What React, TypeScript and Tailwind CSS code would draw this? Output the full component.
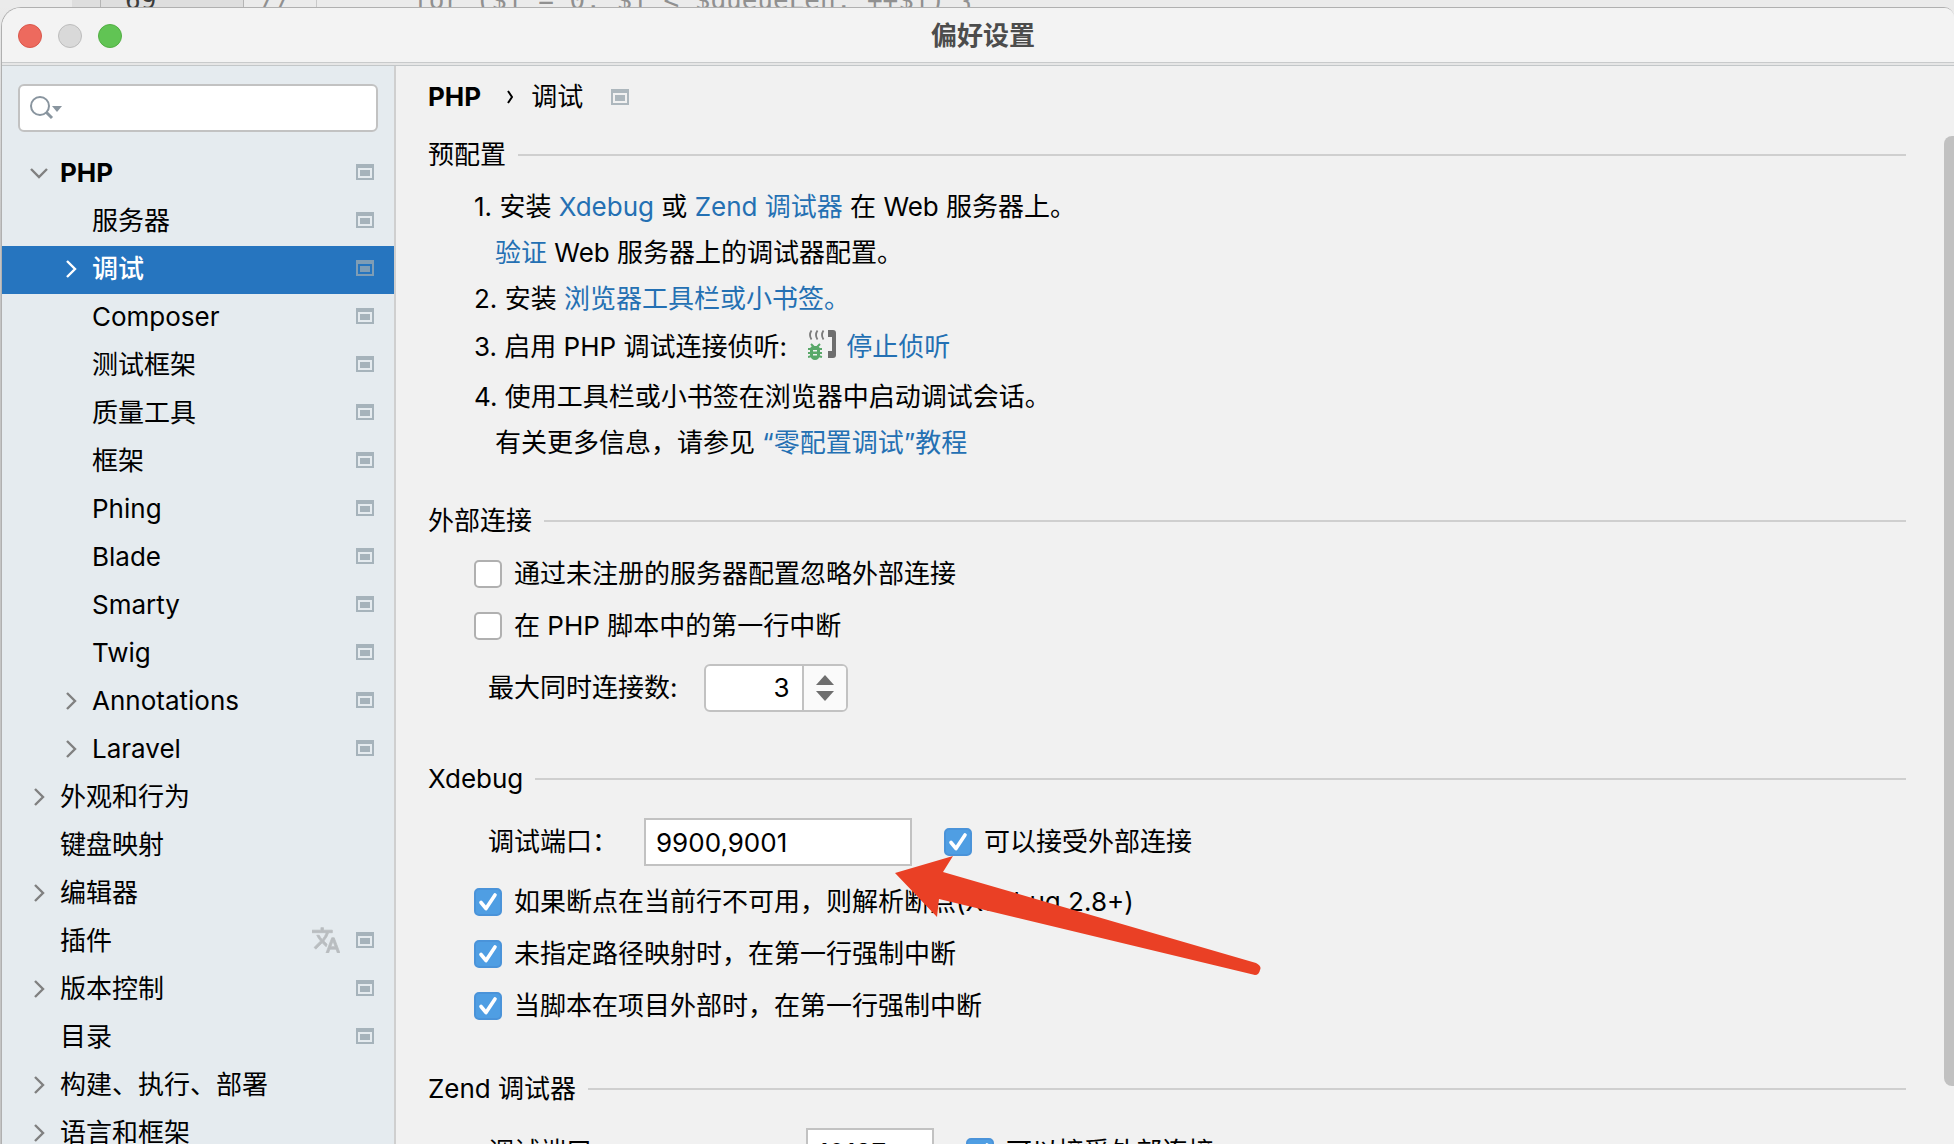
import { useState } from "react";
import type { ReactNode } from "react";

type TreeItem = {
  label: string
  level: number
  arrow?: 'down' | 'right'
  project?: boolean
  translate?: boolean
  bold?: boolean
}

const items: TreeItem[] = [
  { label: 'PHP', level: 0, arrow: 'down', project: true, bold: true },
  { label: '服务器', level: 1, project: true },
  { label: '调试', level: 1, arrow: 'right', project: true },
  { label: 'Composer', level: 1, project: true },
  { label: '测试框架', level: 1, project: true },
  { label: '质量工具', level: 1, project: true },
  { label: '框架', level: 1, project: true },
  { label: 'Phing', level: 1, project: true },
  { label: 'Blade', level: 1, project: true },
  { label: 'Smarty', level: 1, project: true },
  { label: 'Twig', level: 1, project: true },
  { label: 'Annotations', level: 1, arrow: 'right', project: true },
  { label: 'Laravel', level: 1, arrow: 'right', project: true },
  { label: '外观和行为', level: 0, arrow: 'right' },
  { label: '键盘映射', level: 0 },
  { label: '编辑器', level: 0, arrow: 'right' },
  { label: '插件', level: 0, project: true, translate: true },
  { label: '版本控制', level: 0, arrow: 'right', project: true },
  { label: '目录', level: 0, project: true },
  { label: '构建、执行、部署', level: 0, arrow: 'right' },
  { label: '语言和框架', level: 0, arrow: 'right' },
]

export default function App() {
  const [selected, setSelected] = useState<string>('调试')

  return (
    <div className="relative flex h-screen flex-col overflow-hidden bg-[#c4c4c4] font-[Inter,'Noto_Sans_CJK_SC',sans-serif] text-[26px] leading-[46px] text-black">
      <EditorStrip />
      <div className="flex min-h-0 flex-1 bg-linear-to-b from-[#ebebeb] to-[#c4c4c4] to-20% pl-px">
        <div className="flex min-w-0 flex-1 flex-col overflow-hidden rounded-tl-[20px] rounded-tr-[10px] border-t border-l border-[#b0b0b0] bg-[#f1f1f1]">
          <TitleBar />
          <div className="flex min-h-0 flex-1">
            <aside className="w-[394px] shrink-0 overflow-hidden border-r-2 border-[#cfcfcf] bg-[#e5ebef]">
              <SearchBox />
              <nav className="mt-[18px]">
                {items.map((item) => (
                  <TreeRow
                    key={item.label}
                    item={item}
                    active={item.label === selected}
                    onSelect={() => setSelected(item.label)}
                  />
                ))}
              </nav>
            </aside>
            <main className="relative min-w-0 flex-1 overflow-hidden pt-2 pr-12 pl-8">
              <DebugSettings />
              <div className="absolute top-[70px] right-0 h-[950px] w-[10px] rounded-l-lg bg-[#c1c1c1]" />
            </main>
          </div>
        </div>
      </div>
      <Arrow />
    </div>
  );
}

// The editor behind the dialog, only a few pixels of it are visible
function EditorStrip() {
  return (
    <div className="flex h-[7px] shrink-0 overflow-hidden bg-[#ebebeb] font-['DejaVu_Sans_Mono',monospace] leading-[14px] text-[#909090]">
      <div className="w-[72px] shrink-0" />
      <div className="w-7 shrink-0 bg-[#dedede]" />
      <div className="flex w-[144px] shrink-0 items-end border-x border-[#b5b5b5] bg-[#dedede] pl-6 text-[#3c3c3c]">69</div>
      <div className="flex w-[73px] shrink-0 items-end border-r border-[#c9c9c9] pl-4">//</div>
      <pre className="flex items-end pl-24 font-[inherit]">{'for ($i = 0; $i < $queueLen; ++$i) {'}</pre>
    </div>
  )
}

function TitleBar() {
  return (
    <header className="shrink-0 border-b border-[#c3c7c9] bg-[#e6e6e6] pb-0.5">
      <div className="flex h-[55px] items-center border-b border-[#c8cacb] bg-[#f3f3f3] pt-0.5 pr-1.5 pl-4">
        <div className="flex w-0 gap-4">
          <button aria-label="关闭" className="size-6 shrink-0 rounded-full border border-[#d9574b] bg-[#ed6a5e]" />
          <button aria-label="最小化" className="size-6 shrink-0 rounded-full border border-[#bcbcbc] bg-[#d9d9d9]" />
          <button aria-label="缩放" className="size-6 shrink-0 rounded-full border border-[#52ae43] bg-[#61c454]" />
        </div>
        <h1 className="flex-1 text-center font-bold text-[#4c4c4c]">偏好设置</h1>
      </div>
    </header>
  )
}

function SearchBox() {
  return (
    <label className="mx-4 mt-[18px] flex h-12 items-center rounded-md border-2 border-[#c2c2c2] bg-white pl-2">
      <svg width="34" height="26" viewBox="0 0 34 26" fill="none" className="shrink-0">
        <circle cx="12" cy="11" r="9" stroke="#89959f" strokeWidth="2" />
        <path d="M18 17l6 6" stroke="#89959f" strokeWidth="3" />
        <path d="M24 11h10l-5 6z" fill="#89959f" />
      </svg>
      <input type="text" aria-label="搜索" className="w-full min-w-0 bg-transparent px-2 outline-none" />
    </label>
  )
}

function ProjectIcon({ className = '' }: { className?: string }) {
  return (
    <svg width="18" height="16" viewBox="0 0 18 16" className={'shrink-0 ' + className}>
      <path fillRule="evenodd" d="M0 0h18v16H0zM2 4v10h14V4z" fill="currentColor" />
      <path d="M4 6h10v6H4z" fill="currentColor" />
    </svg>
  )
}

function Chevron({ down }: { down?: boolean }) {
  return (
    <svg width="18" height="18" viewBox="0 0 18 18" fill="none" stroke="currentColor" strokeWidth="2.4" className="shrink-0">
      <path d={down ? 'M1 5l8 8 8-8' : 'M5 1l8 8-8 8'} />
    </svg>
  )
}

function TranslateIcon() {
  return (
    <svg width="28" height="26" viewBox="1 1.5 22 20.5" className="shrink-0 text-[#b9bdc0]">
      <path
        fill="currentColor"
        stroke="currentColor"
        strokeWidth="0.6"
        d="M12.87 15.07l-2.54-2.51.03-.03A17.52 17.52 0 0 0 14.07 6H17V4h-7V2H8v2H1v2h11.17C11.5 7.92 10.44 9.75 9 11.35 8.07 10.32 7.3 9.19 6.69 8h-2c.73 1.63 1.73 3.17 2.98 4.56l-5.09 5.02L4 19l5-5 3.11 3.11.76-2.04zM18.5 10h-2L12 22h2l1.12-3h4.75L21 22h2l-4.5-12zm-2.62 7l1.62-4.33L19.12 17h-3.24z"
      />
    </svg>
  )
}

function TreeRow({ item, active, onSelect }: { item: TreeItem; active: boolean; onSelect: () => void }) {
  return (
    <button
      onClick={onSelect}
      className={
        'flex h-12 w-full items-center pr-5 pb-0.5 text-left ' +
        (item.level === 0 ? 'pl-7 ' : 'pl-[60px] ') +
        (active ? 'bg-[#2675bf] font-medium text-white ' : '') +
        (item.bold ? 'font-bold' : '')
      }
    >
      <span className={'w-[18px] shrink-0 ' + (active ? 'text-white' : 'text-[#808080]')}>
        {item.arrow && <Chevron down={item.arrow === 'down'} />}
      </span>
      <span className="flex-1 pl-3">{item.label}</span>
      <span className={'flex items-center gap-4 pb-0.5 ' + (active ? 'text-[#7f9db5]' : 'text-[#a6b3bb]')}>
        {item.translate && <TranslateIcon />}
        {item.project && <ProjectIcon />}
      </span>
    </button>
  )
}

function Section({ title, children }: { title: string; children?: ReactNode }) {
  return (
    <section>
      <h2 className="flex items-center gap-3">
        {title}
        <span className="h-0.5 flex-1 bg-[#cfcfcf]" />
      </h2>
      {children}
    </section>
  )
}

function Link({ children }: { children: ReactNode }) {
  return <a href="#" className="text-[#2470b3]">{children}</a>
}

function CheckBox({ label, checked = false }: { label: string; checked?: boolean }) {
  return (
    <label className="flex h-[52px] items-center gap-3">
      <span className="relative size-7 shrink-0">
        <input
          type="checkbox"
          defaultChecked={checked}
          className="peer block size-7 appearance-none rounded-[5px] border-2 border-[#b0b0b0] bg-white checked:border-[#4a93d9] checked:bg-[#4f9ee3]"
        />
        <svg viewBox="0 0 28 28" fill="none" stroke="#fff" strokeWidth="3.6" strokeLinecap="round" strokeLinejoin="round" className="pointer-events-none absolute inset-0 hidden peer-checked:block">
          <path d="M7 14.500l5 6L21 7" />
        </svg>
      </span>
      <span>{label}</span>
    </label>
  )
}

function ListenIcon() {
  return (
    <svg width="28" height="30" viewBox="0 0 28 30" fill="none" className="mr-2.5 ml-3.5 inline-block align-[-4px]">
      <path d="M3.500 .5q-3 4.500 0 9M9.500 .5q-3 4.500 0 9M15.500 .5q-3 4.500 0 9" stroke="#7a7a7a" strokeWidth="1.800" />
      <path d="M20 0h5q3 0 3 3v22q0 3-3 3h-5v-7h4V7h-4z" fill="#6e6e6e" />
      <path d="M3 14l3 3M12 14l-3 3M0 19h4M0 23h4M0 27l4-1M14 19h-4M14 23h-4M14 27l-4-1" stroke="#59a869" strokeWidth="2" />
      <path fillRule="evenodd" d="M4 16h6q2 1 2 4v5q-1 5-5 5t-5-5v-5q0-3 2-4zM5 20v1.500h4V20zM5 24v1.500h4V24z" fill="#59a869" />
    </svg>
  )
}

function Spinner() {
  const [count, setCount] = useState<number>(3)
  return (
    <div className="flex h-12 w-36 overflow-hidden rounded-md border-2 border-[#c2c2c2] bg-white">
      <input
        id="max-connections"
        type="text"
        value={count}
        onChange={(e) => setCount(Number(e.target.value) || 0)}
        className="min-w-0 flex-1 pr-3 text-right outline-none"
      />
      <div className="flex w-11 flex-col items-center justify-center gap-1.5 border-l-2 border-[#c2c2c2] bg-[#fafafa] text-[#6e6e6e]">
        <button aria-label="增加" onClick={() => setCount(count + 1)}>
          <svg width="18" height="10" viewBox="0 0 18 10" className="block"><path d="M0 10L9 0l9 10z" fill="currentColor" /></svg>
        </button>
        <button aria-label="减少" onClick={() => setCount(count - 1)}>
          <svg width="18" height="10" viewBox="0 0 18 10" className="block"><path d="M0 0h18L9 10z" fill="currentColor" /></svg>
        </button>
      </div>
    </div>
  )
}

function DebugSettings() {
  return (
    <>
      <div className="flex items-center">
        <span className="font-bold">PHP</span>
        <svg width="8" height="14" viewBox="0 0 8 14" fill="none" stroke="#000" strokeWidth="2" className="mr-4 ml-[26px]"><path d="M1 1l4 6-4 6" /></svg>
        <span>调试</span>
        <ProjectIcon className="ml-7 text-[#adb7bd]" />
      </div>

      <div className="mt-3">
        <Section title="预配置">
          <ol className="mt-1.5 pl-[46px]">
            <li>
              1. 安装 <Link>Xdebug</Link> 或 <Link>Zend 调试器</Link> 在 Web 服务器上。
              <p className="pl-[21px]"><Link>验证</Link> Web 服务器上的调试器配置。</p>
            </li>
            <li>2. 安装 <Link>浏览器工具栏或小书签。</Link></li>
            <li className="mt-0.5">3. 启用 PHP 调试连接侦听: <ListenIcon /><Link>停止侦听</Link></li>
            <li className="mt-1">
              4. 使用工具栏或小书签在浏览器中启动调试会话。
              <p className="pl-[21px]">有关更多信息，请参见 <Link>“零配置调试”教程</Link></p>
            </li>
          </ol>
        </Section>
      </div>

      <div className="mt-8">
        <Section title="外部连接">
          <div className="mt-1 pl-[46px]">
            <CheckBox label="通过未注册的服务器配置忽略外部连接" />
            <CheckBox label="在 PHP 脚本中的第一行中断" />
            <div className="mt-3 flex items-center gap-[26px] pl-[14px]">
              <label htmlFor="max-connections">最大同时连接数:</label>
              <Spinner />
            </div>
          </div>
        </Section>
      </div>

      <div className="mt-11">
        <Section title="Xdebug">
          <div className="mt-3.5 pl-[46px]">
            <div className="flex items-center pl-[14px]">
              <label htmlFor="xdebug-port" className="w-[156px]">调试端口：</label>
              <input id="xdebug-port" type="text" defaultValue="9900,9001" className="mr-8 h-12 w-[268px] border-2 border-[#c2c2c2] bg-white px-2.5 outline-none" />
              <CheckBox label="可以接受外部连接" checked />
            </div>
            <div className="mt-2">
              <CheckBox label="如果断点在当前行不可用，则解析断点(Xdebug 2.8+)" checked />
              <CheckBox label="未指定路径映射时，在第一行强制中断" checked />
              <CheckBox label="当脚本在项目外部时，在第一行强制中断" checked />
            </div>
          </div>
        </Section>
      </div>

      <div className="mt-[34px]">
        <Section title="Zend 调试器">
          <div className="mt-3.5 flex items-center pl-[60px]">
            <label htmlFor="zend-port" className="w-[318px]">调试端口：</label>
            <input id="zend-port" type="text" defaultValue="10137" className="mr-8 h-12 w-32 border-2 border-[#c2c2c2] bg-white px-2.5 outline-none" />
            <CheckBox label="可以接受外部连接" checked />
          </div>
        </Section>
      </div>
    </>
  )
}

// Red marker pointing at the Xdebug port field
function Arrow() {
  return (
    <svg width="366" height="120" viewBox="895 856 366 120" className="pointer-events-none absolute top-[856px] left-[895px]">
      <path d="M895 873L953 856L943 872L1256 963Q1262 966 1260 970Q1259 975 1255 975L939 899L937 917Z" fill="#ea4025" />
    </svg>
  )
}
